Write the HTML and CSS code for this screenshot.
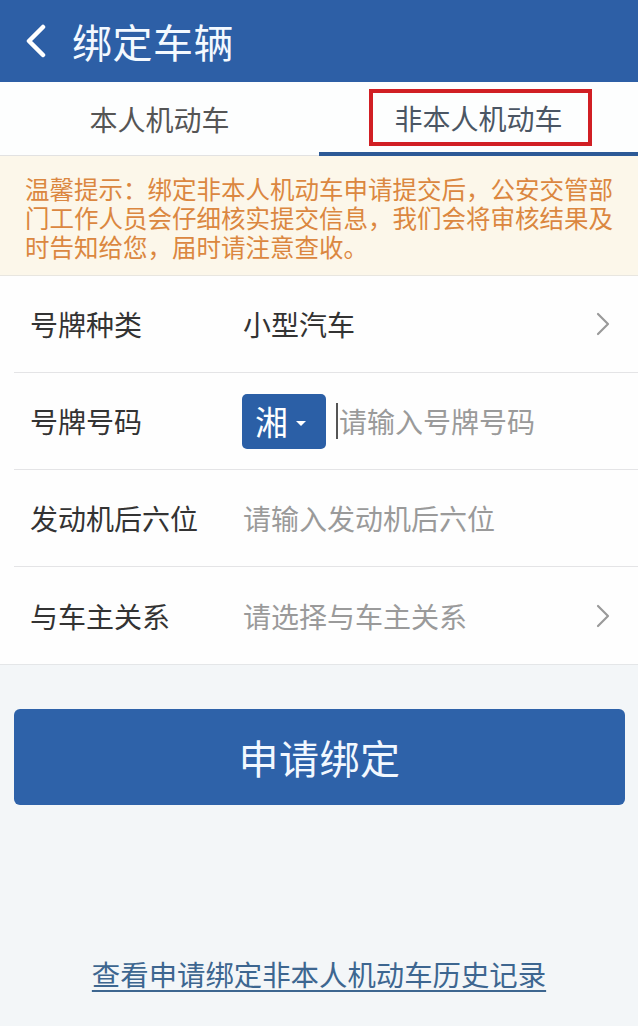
FILE: index.html
```html
<!DOCTYPE html>
<html lang="zh-CN">
<head>
    <meta charset="UTF-8">
    <meta name="viewport" content="width=device-width, initial-scale=1.0">
    <title>绑定车辆</title>
    <link rel="stylesheet" href="styles.css">
</head>
<body>
    <div class="header">
        <svg class="back" width="24" height="34" viewBox="0 0 24 34">
            <path d="M19 3 L5 17 L19 31" fill="none" stroke="#fff" stroke-width="4.5" stroke-linecap="round" stroke-linejoin="round"/>
        </svg>
        <h1>绑定车辆</h1>
    </div>

    <div class="tabs">
        <div class="tab">本人机动车</div>
        <div class="tab active">
            <span>非本人机动车</span>
            <div class="mark"></div>
        </div>
    </div>

    <div class="tip">温馨提示：绑定非本人机动车申请提交后，公安交管部门工作人员会仔细核实提交信息，我们会将审核结果及时告知给您，届时请注意查收。</div>

    <div class="form">
        <div class="row">
            <div class="label">号牌种类</div>
            <div class="value">小型汽车</div>
            <svg class="arrow" width="14" height="24" viewBox="0 0 14 24">
                <path d="M2 2 L12 12 L2 22" fill="none" stroke="#9a9a9a" stroke-width="2.2" stroke-linecap="round" stroke-linejoin="round"/>
            </svg>
        </div>
        <div class="row">
            <div class="label">号牌号码</div>
            <div class="plate">湘<span class="caret"></span></div>
            <span class="cursor"></span>
            <div class="value hint">请输入号牌号码</div>
        </div>
        <div class="row">
            <div class="label">发动机后六位</div>
            <div class="value hint">请输入发动机后六位</div>
        </div>
        <div class="row">
            <div class="label">与车主关系</div>
            <div class="value hint">请选择与车主关系</div>
            <svg class="arrow" width="14" height="24" viewBox="0 0 14 24">
                <path d="M2 2 L12 12 L2 22" fill="none" stroke="#9a9a9a" stroke-width="2.2" stroke-linecap="round" stroke-linejoin="round"/>
            </svg>
        </div>
    </div>

    <div class="submit">申请绑定</div>

    <a class="history" href="#">查看申请绑定非本人机动车历史记录</a>
</body>
</html>
```

FILE: styles.css
```css
body {
    font-family: "Noto Sans CJK SC", "Noto Sans", sans-serif;
    margin: 0;
    padding: 0;
    background-color: #f3f6f8;
    width: 638px;
    height: 1026px;
    overflow: hidden;
}

/* Header */
.header {
    background: #2d5fa6;
    height: 82px;
    display: flex;
    align-items: center;
    padding-left: 24px;
    box-sizing: border-box;
}
.header .back {
    margin-right: 24px;
}
.header h1 {
    margin: 0;
    color: #f4f9ff;
    font-size: 40px;
    font-weight: normal;
    line-height: 1;
    letter-spacing: 0.5px;
}

/* Tabs */
.tabs {
    display: flex;
    height: 74px;
    background: #fdfefe;
    border-bottom: 1px solid #e2e2e2;
    box-sizing: border-box;
}
.tab {
    flex: 1;
    display: flex;
    align-items: center;
    justify-content: center;
    font-size: 28px;
    color: #555;
    position: relative;
}
.tab.active {
    color: #4b5664;
    border-bottom: 4px solid #2d5a96;
    margin-bottom: -1px;
    padding-top: 2px;
}
.tab .mark {
    position: absolute;
    left: 50px;
    top: 7px;
    width: 223px;
    height: 57px;
    border: 4px solid #d11f24;
    box-sizing: border-box;
}

/* Tip */
.tip {
    background: #fcf7ea;
    color: #db8740;
    font-size: 24.5px;
    line-height: 29px;
    padding: 18px 24px 15px 25px;
    height: 120px;
    box-sizing: border-box;
    border-bottom: 1px solid #e8e6e0;
}

/* Form */
.form {
    background: #fefefe;
    border-bottom: 1px solid #e4e6e8;
}
.row {
    display: flex;
    align-items: center;
    height: 97px;
    margin-left: 14px;
    padding-left: 16px;
    padding-right: 28px;
    border-bottom: 1.5px solid #e4e4e6;
    box-sizing: border-box;
}
.row:last-child {
    border-bottom: 0;
}
.label {
    width: 213px;
    font-size: 28px;
    color: #333;
}
.value {
    flex: 1;
    font-size: 28px;
    color: #333;
}
.value.hint {
    color: #9a9a9a;
}
.plate {
    width: 84px;
    height: 55px;
    background: #2b5fa6;
    border-radius: 5px;
    color: #fff;
    font-size: 33px;
    display: flex;
    align-items: center;
    padding-left: 13px;
    box-sizing: border-box;
    margin-left: -1px;
}
.caret {
    display: inline-block;
    margin-left: 8px;
    margin-top: 4px;
    border-left: 5px solid transparent;
    border-right: 5px solid transparent;
    border-top: 5px solid #fff;
}
.cursor {
    width: 2px;
    height: 36px;
    background: #555;
    margin-left: 10px;
    margin-right: 1px;
}

/* Button */
.submit {
    margin: 44px 13px 0 14px;
    height: 96px;
    background: #2e62a9;
    border-radius: 6px;
    color: #f2f8ff;
    font-size: 40px;
    display: flex;
    align-items: center;
    justify-content: center;
    letter-spacing: 0.5px;
}

.history {
    display: block;
    margin-top: 148px;
    text-align: center;
    font-size: 28.4px;
    color: #3d6690;
    text-decoration: underline;
    text-underline-offset: 4px;
    text-decoration-thickness: 2px;
}
```
